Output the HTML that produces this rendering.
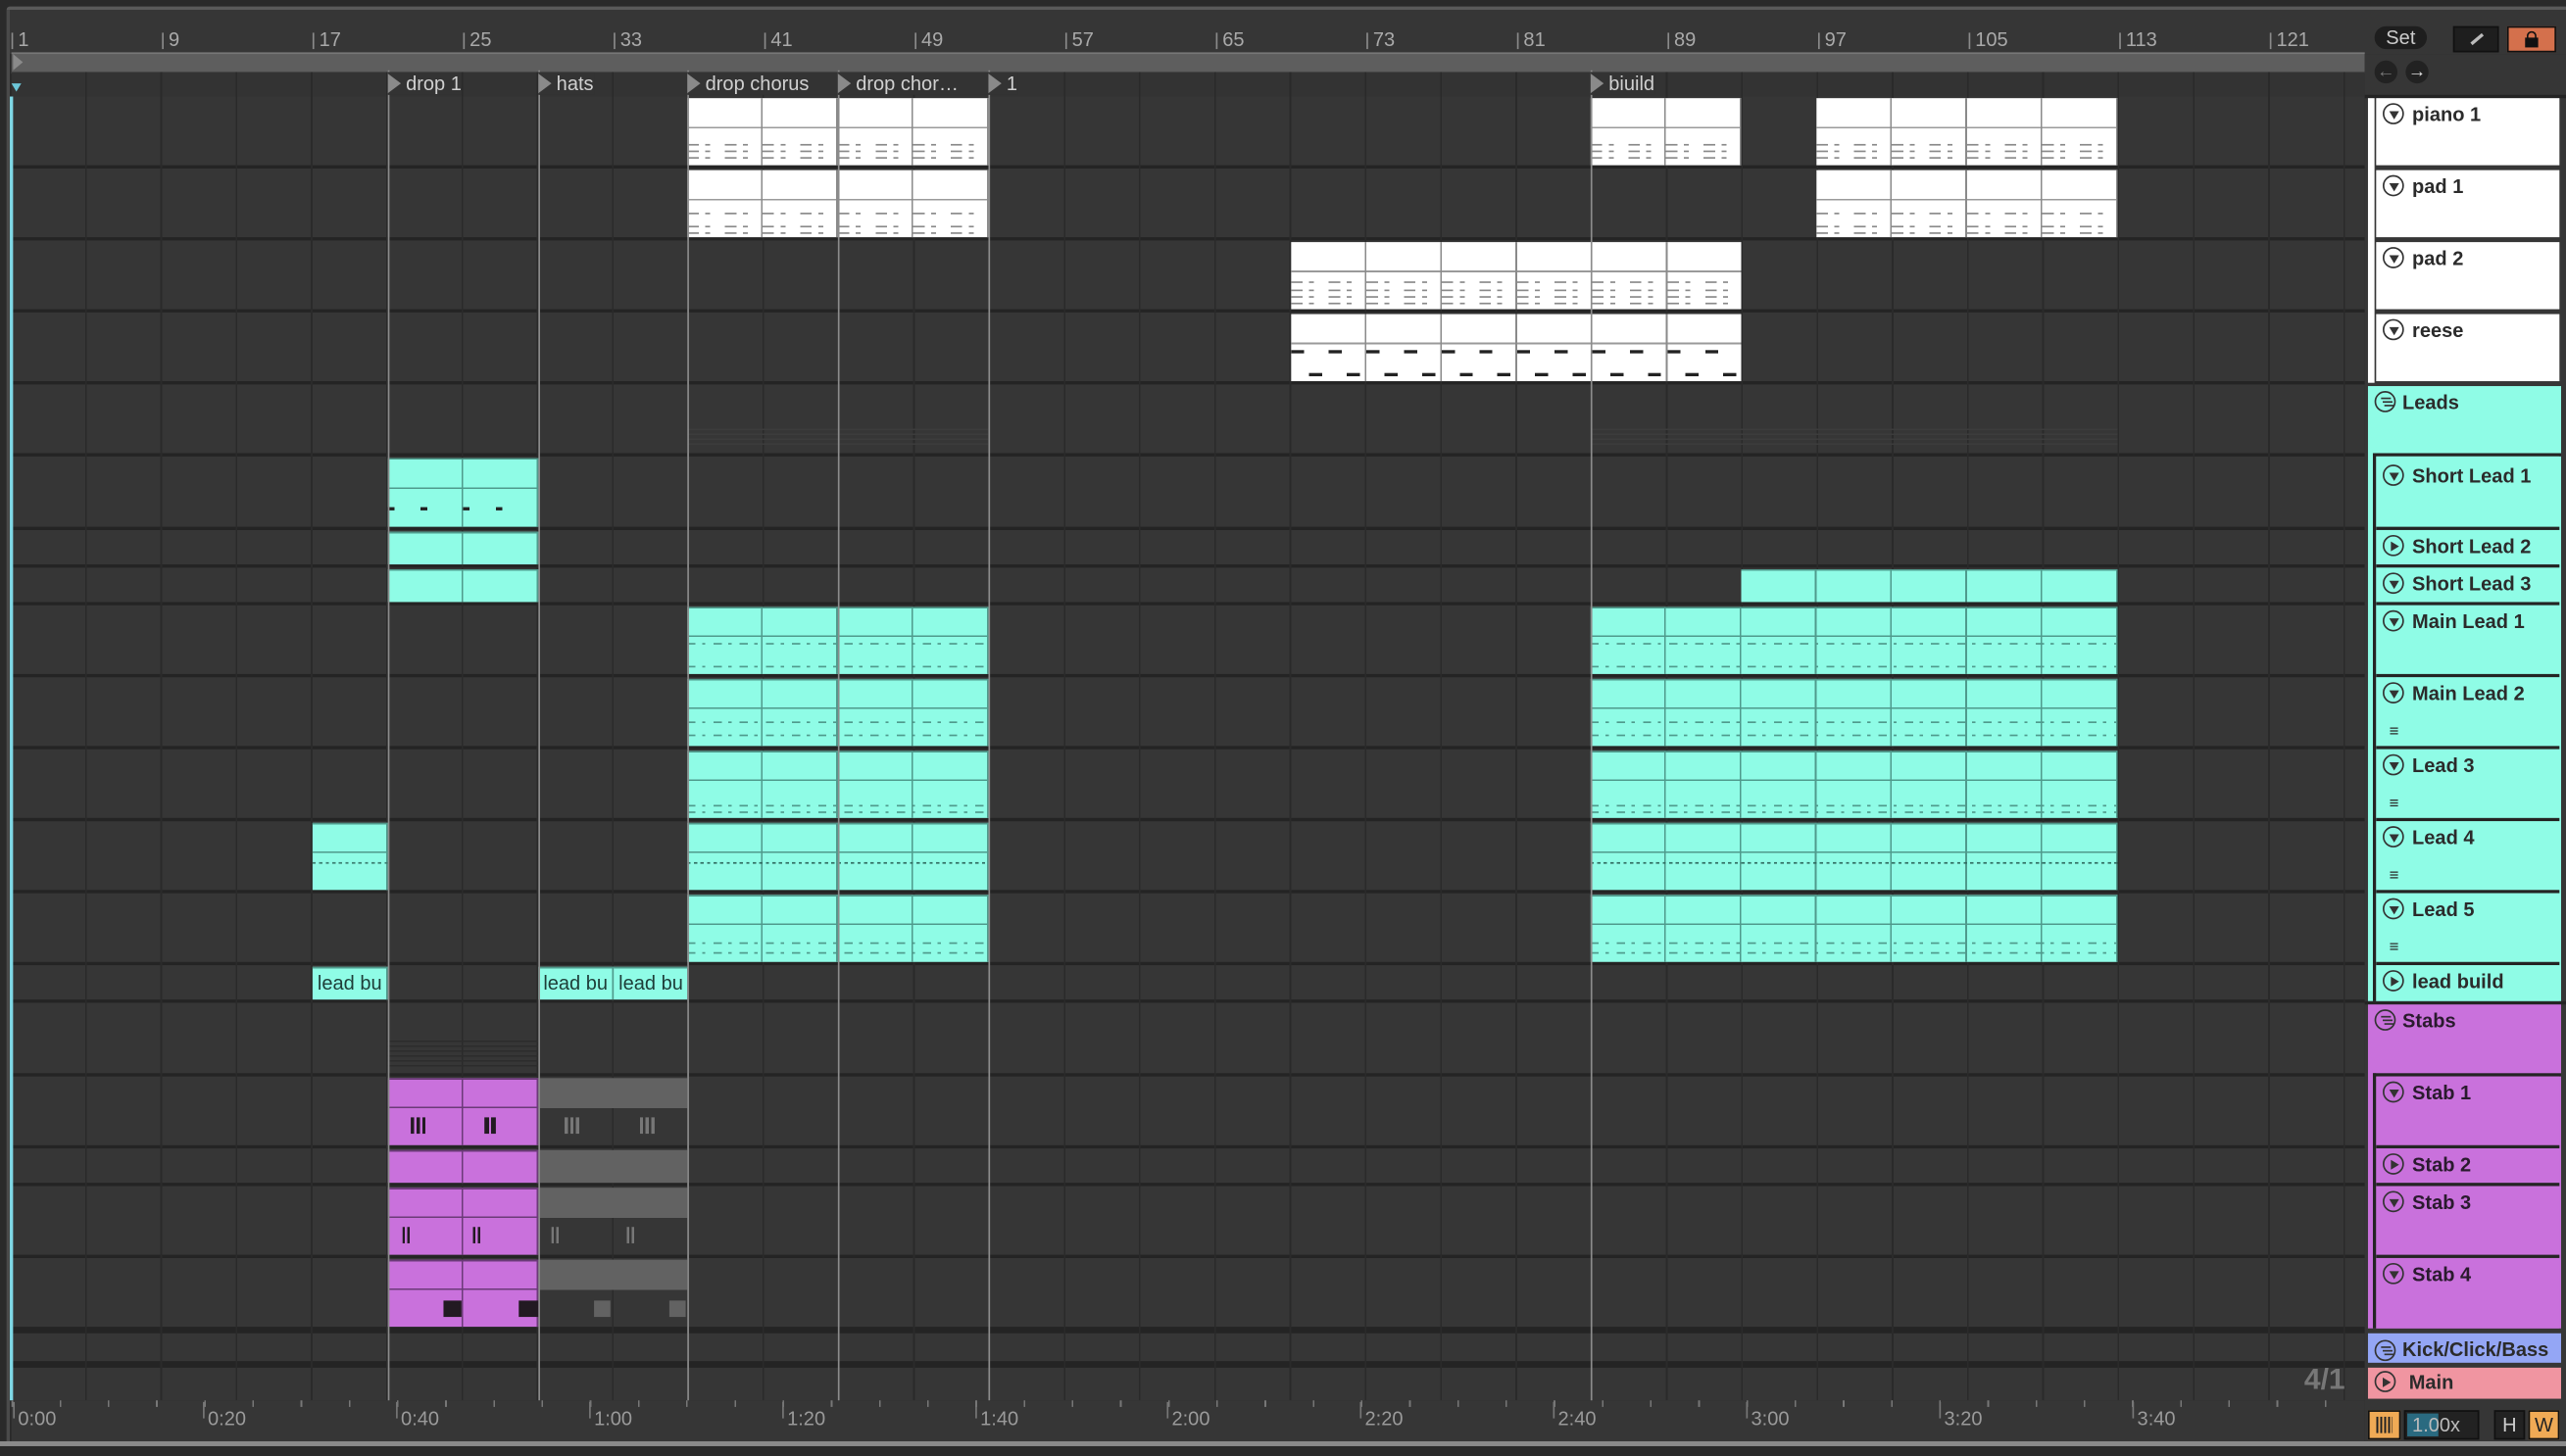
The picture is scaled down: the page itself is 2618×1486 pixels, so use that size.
<!DOCTYPE html>
<html><head><meta charset="utf-8"><style>
html,body{margin:0;padding:0;background:#2a2a2a;overflow:hidden;width:2618px;height:1486px}
#s{position:absolute;left:0;top:0;width:1568px;height:890px;transform:scale(1.66964,1.66966);transform-origin:0 0;font-family:"Liberation Sans",sans-serif;background:#2a2a2a}
.a{position:absolute}
.rl{position:absolute;top:17px;font-size:12px;color:#a9a9a9}
.tk{position:absolute;top:20px;width:1px;height:10px;background:#8a8a8a}
.row{position:absolute;left:7px;width:1438px;background:#363636}
.loc{position:absolute;top:43px;width:1px;height:814px;background:#8c8c8c}
.ll{position:absolute;top:44px;font-size:12px;color:#d0d0d0;padding-left:11px;background:#333;height:14px;line-height:14px}
.ll:before{content:"";position:absolute;left:0;top:1px;width:0;height:0;border-left:8px solid #8a8a8a;border-top:6px solid transparent;border-bottom:6px solid transparent}
.c{position:absolute;background:repeating-linear-gradient(90deg,transparent 0 45px,#4f9a8c 45px 46px),linear-gradient(#4f9a8c 0 1px,transparent 1px calc(45% - 1px),#4f9a8c calc(45% - 1px) 45%,transparent 45%),#8ffce6}
.cs{position:absolute;background:repeating-linear-gradient(90deg,transparent 0 45px,#4f9a8c 45px 46px),linear-gradient(#4f9a8c 0 1px,transparent 1px),#8ffce6}
.p{position:absolute;background:repeating-linear-gradient(90deg,transparent 0 45px,#6b3a78 45px 46px),linear-gradient(#6b3a78 0 1px,transparent 1px calc(45% - 1px),#6b3a78 calc(45% - 1px) 45%,transparent 45%),#c971dc}
.ps{position:absolute;background:repeating-linear-gradient(90deg,transparent 0 45px,#6b3a78 45px 46px),linear-gradient(#6b3a78 0 1px,transparent 1px),#c971dc}
.g{position:absolute;background:linear-gradient(#626262 0 45%,transparent 45%)}
.gs{position:absolute;background:#626262}
.w{position:absolute;background:repeating-linear-gradient(90deg,transparent 0 45px,#8a8a8a 45px 46px),linear-gradient(transparent calc(45% - 1px),#9a9a9a calc(45% - 1px) 45%,transparent 45%),#fff}
.n{position:absolute;left:0;right:0;height:1px}
.nc{background:repeating-linear-gradient(90deg,#4f9a8c 0 5px,transparent 5px 9px,#4f9a8c 9px 11px,transparent 11px 16px)}
.nw{background:repeating-linear-gradient(90deg,#8a8a8a 0 7px,transparent 7px 11px,#8a8a8a 11px 14px,transparent 14px 23px)}
.hd{position:absolute;left:1452px;width:112px;font-size:12px;font-weight:bold;color:#2b2b2b}
.hd span{position:absolute;left:22px;top:3px;white-space:nowrap}
.ic{position:absolute;left:4px;top:3px;width:11px;height:11px;border:1.4px solid #333;border-radius:50%}
.ic.d:after{content:"";position:absolute;left:2.5px;top:3.5px;border-top:5px solid #333;border-left:3px solid transparent;border-right:3px solid transparent}
.ic.r:after{content:"";position:absolute;left:4px;top:2.5px;border-left:5px solid #333;border-top:3px solid transparent;border-bottom:3px solid transparent}
.ic.m:after{content:"";position:absolute;left:2.5px;top:3px;width:6px;height:1.2px;background:#333;box-shadow:1px 2.2px 0 #333,2px 4.4px 0 #333}
.tm{position:absolute;top:860px;font-size:12px;color:#9a9a9a}
.tm:before{content:"";position:absolute;left:-3px;top:-3px;width:1px;height:10px;background:#777}
</style></head><body><div id="s">
<div class="a" style="left:4px;top:4px;width:1564px;height:2px;background:#5a5a5a;border-radius:3px 0 0 0"></div>
<div class="a" style="left:4px;top:6px;width:1564px;height:27px;background:#363636"></div>
<div class="a" style="left:4px;top:6px;width:2px;height:876px;background:#4a4a4a"></div>
<div class="a" style="left:7px;top:32px;width:1438px;height:11px;background:#5e5e5e;border-top:1px solid #777;border-bottom:1px solid #777"></div>
<div class="a" style="left:8px;top:33px;border-left:6px solid #8a8a8a;border-top:5px solid transparent;border-bottom:5px solid transparent"></div>
<div class="a" style="left:7px;top:44px;width:1438px;height:15px;background:#333;background-image:repeating-linear-gradient(90deg,transparent 0 45px,#2a2a2a 45px 46px)"></div>
<div class="tk" style="left:7px"></div><div class="rl" style="left:11px">1</div>
<div class="tk" style="left:99px"></div><div class="rl" style="left:103px">9</div>
<div class="tk" style="left:191px"></div><div class="rl" style="left:195px">17</div>
<div class="tk" style="left:283px"></div><div class="rl" style="left:287px">25</div>
<div class="tk" style="left:375px"></div><div class="rl" style="left:379px">33</div>
<div class="tk" style="left:467px"></div><div class="rl" style="left:471px">41</div>
<div class="tk" style="left:559px"></div><div class="rl" style="left:563px">49</div>
<div class="tk" style="left:651px"></div><div class="rl" style="left:655px">57</div>
<div class="tk" style="left:743px"></div><div class="rl" style="left:747px">65</div>
<div class="tk" style="left:835px"></div><div class="rl" style="left:839px">73</div>
<div class="tk" style="left:927px"></div><div class="rl" style="left:931px">81</div>
<div class="tk" style="left:1019px"></div><div class="rl" style="left:1023px">89</div>
<div class="tk" style="left:1111px"></div><div class="rl" style="left:1115px">97</div>
<div class="tk" style="left:1203px"></div><div class="rl" style="left:1207px">105</div>
<div class="tk" style="left:1295px"></div><div class="rl" style="left:1299px">113</div>
<div class="tk" style="left:1387px"></div><div class="rl" style="left:1391px">121</div>
<div class="a" style="left:7px;top:59px;width:1438px;height:797px;background:#242424"></div>
<div class="row" style="top:59px;height:42px"></div>
<div class="row" style="top:103px;height:42px"></div>
<div class="row" style="top:147px;height:42px"></div>
<div class="row" style="top:191px;height:42px"></div>
<div class="row" style="top:235px;height:42px"></div>
<div class="row" style="top:279px;height:43px"></div>
<div class="row" style="top:324px;height:21px"></div>
<div class="row" style="top:347px;height:21px"></div>
<div class="row" style="top:370px;height:42px"></div>
<div class="row" style="top:414px;height:42px"></div>
<div class="row" style="top:458px;height:42px"></div>
<div class="row" style="top:502px;height:42px"></div>
<div class="row" style="top:546px;height:42px"></div>
<div class="row" style="top:590px;height:21px"></div>
<div class="row" style="top:613px;height:43px"></div>
<div class="row" style="top:658px;height:42px"></div>
<div class="row" style="top:702px;height:21px"></div>
<div class="row" style="top:725px;height:42px"></div>
<div class="row" style="top:769px;height:42px"></div>
<div class="row" style="top:815px;height:17px"></div>
<div class="row" style="top:836px;height:20px"></div>
<div class="a" style="left:7px;top:59px;width:1438px;height:797px;background:repeating-linear-gradient(90deg,transparent 0 45px,#2a2a2a 45px 46px)"></div>
<div class="a" style="left:6px;top:59px;width:2px;height:797px;background:#7fd8e6"></div>
<div class="a" style="left:420px;top:262px;width:184px;height:12px;background:repeating-linear-gradient(#3c3c3c 0 1px,transparent 1px 3px)"></div>
<div class="a" style="left:972px;top:262px;width:322px;height:12px;background:repeating-linear-gradient(#3c3c3c 0 1px,transparent 1px 3px)"></div>
<div class="a" style="left:237px;top:636px;width:92px;height:18px;background:repeating-linear-gradient(#2c2c2c 0 1px,transparent 1px 3px)"></div>
<div class="w" style="left:420px;top:60px;width:184px;height:41px"><div class="n nw" style="top:28px"></div><div class="n nw" style="top:32px"></div><div class="n nw" style="top:36px"></div></div>
<div class="w" style="left:972px;top:60px;width:92px;height:41px"><div class="n nw" style="top:28px"></div><div class="n nw" style="top:32px"></div><div class="n nw" style="top:36px"></div></div>
<div class="w" style="left:1110px;top:60px;width:184px;height:41px"><div class="n nw" style="top:28px"></div><div class="n nw" style="top:32px"></div><div class="n nw" style="top:36px"></div></div>
<div class="w" style="left:420px;top:104px;width:184px;height:41px"><div class="n nw" style="top:26px"></div><div class="n nw" style="top:34px"></div><div class="n nw" style="top:38px"></div></div>
<div class="w" style="left:1110px;top:104px;width:184px;height:41px"><div class="n nw" style="top:26px"></div><div class="n nw" style="top:34px"></div><div class="n nw" style="top:38px"></div></div>
<div class="w" style="left:789px;top:148px;width:275px;height:41px"><div class="n nw" style="top:24px"></div><div class="n nw" style="top:29px"></div><div class="n nw" style="top:33px"></div><div class="n nw" style="top:37px"></div></div>
<div class="w" style="left:789px;top:192px;width:275px;height:41px"><div class="n" style="top:22px;height:2px;background:repeating-linear-gradient(90deg,#222 0 8px,transparent 8px 23px)"></div><div class="n" style="top:36px;height:2px;background:repeating-linear-gradient(90deg,transparent 0 11px,#222 11px 19px,transparent 19px 23px)"></div></div>
<div class="c" style="left:237px;top:280px;width:92px;height:42px"><div class="n" style="top:30px;height:2px;background:repeating-linear-gradient(90deg,#222 0 4px,transparent 4px 20px,#222 20px 24px,transparent 24px 46px)"></div></div>
<div class="cs" style="left:237px;top:325px;width:92px;height:20px"></div>
<div class="cs" style="left:237px;top:348px;width:92px;height:20px"></div>
<div class="cs" style="left:1064px;top:348px;width:230px;height:20px"></div>
<div class="c" style="left:420px;top:371px;width:184px;height:41px"><div class="n nc" style="top:22px"></div><div class="n nc" style="top:36px"></div></div>
<div class="c" style="left:972px;top:371px;width:322px;height:41px"><div class="n nc" style="top:22px"></div><div class="n nc" style="top:36px"></div></div>
<div class="c" style="left:420px;top:415px;width:184px;height:41px"><div class="n nc" style="top:26px"></div><div class="n nc" style="top:34px"></div></div>
<div class="c" style="left:972px;top:415px;width:322px;height:41px"><div class="n nc" style="top:26px"></div><div class="n nc" style="top:34px"></div></div>
<div class="c" style="left:420px;top:459px;width:184px;height:41px"><div class="n nc" style="top:33px"></div><div class="n nc" style="top:37px"></div></div>
<div class="c" style="left:972px;top:459px;width:322px;height:41px"><div class="n nc" style="top:33px"></div><div class="n nc" style="top:37px"></div></div>
<div class="c" style="left:191px;top:503px;width:46px;height:41px"><div class="n" style="top:24px;background:repeating-linear-gradient(90deg,#3a7a6e 0 2px,transparent 2px 4px)"></div></div>
<div class="c" style="left:420px;top:503px;width:184px;height:41px"><div class="n" style="top:24px;background:repeating-linear-gradient(90deg,#2f6a60 0 2px,transparent 2px 4px)"></div></div>
<div class="c" style="left:972px;top:503px;width:322px;height:41px"><div class="n" style="top:24px;background:repeating-linear-gradient(90deg,#2f6a60 0 2px,transparent 2px 4px)"></div></div>
<div class="c" style="left:420px;top:547px;width:184px;height:41px"><div class="n nc" style="top:29px"></div><div class="n nc" style="top:35px"></div></div>
<div class="c" style="left:972px;top:547px;width:322px;height:41px"><div class="n nc" style="top:29px"></div><div class="n nc" style="top:35px"></div></div>
<div class="cs" style="left:191px;top:591px;width:46px;height:20px;font-size:12px;color:#1e3d38;overflow:hidden;white-space:nowrap"><span style="position:absolute;left:3px;top:3px">lead bu</span></div>
<div class="cs" style="left:329px;top:591px;width:46px;height:20px;font-size:12px;color:#1e3d38;overflow:hidden;white-space:nowrap"><span style="position:absolute;left:3px;top:3px">lead bu</span></div>
<div class="cs" style="left:375px;top:591px;width:45px;height:20px;font-size:12px;color:#1e3d38;overflow:hidden;white-space:nowrap"><span style="position:absolute;left:3px;top:3px">lead bu</span></div>
<div class="p" style="left:237px;top:659px;width:92px;height:41px"><div class="a" style="left:14px;top:24px;width:9px;height:10px;background:repeating-linear-gradient(90deg,#221a22 0 2px,transparent 2px 3.5px)"></div><div class="a" style="left:59px;top:24px;width:7px;height:10px;background:repeating-linear-gradient(90deg,#221a22 0 3px,transparent 3px 4px)"></div></div>
<div class="g" style="left:329px;top:659px;width:91px;height:41px"><div class="a" style="left:16px;top:24px;width:9px;height:10px;background:repeating-linear-gradient(90deg,#777 0 2px,transparent 2px 3.5px)"></div><div class="a" style="left:62px;top:24px;width:9px;height:10px;background:repeating-linear-gradient(90deg,#777 0 2px,transparent 2px 3.5px)"></div></div>
<div class="ps" style="left:237px;top:703px;width:92px;height:20px"></div>
<div class="gs" style="left:329px;top:703px;width:91px;height:20px"></div>
<div class="p" style="left:237px;top:726px;width:92px;height:41px"><div class="a" style="left:9px;top:24px;width:5px;height:10px;background:repeating-linear-gradient(90deg,#221a22 0 1.5px,transparent 1.5px 3px)"></div><div class="a" style="left:52px;top:24px;width:5px;height:10px;background:repeating-linear-gradient(90deg,#221a22 0 1.5px,transparent 1.5px 3px)"></div></div>
<div class="g" style="left:329px;top:726px;width:91px;height:41px"><div class="a" style="left:8px;top:24px;width:5px;height:10px;background:repeating-linear-gradient(90deg,#777 0 1.5px,transparent 1.5px 3px)"></div><div class="a" style="left:54px;top:24px;width:5px;height:10px;background:repeating-linear-gradient(90deg,#777 0 1.5px,transparent 1.5px 3px)"></div></div>
<div class="p" style="left:237px;top:770px;width:92px;height:41px"><div class="a" style="left:34px;top:25px;width:11px;height:10px;background:#221a22"></div><div class="a" style="left:80px;top:25px;width:12px;height:10px;background:#221a22"></div></div>
<div class="g" style="left:329px;top:770px;width:91px;height:41px"><div class="a" style="left:34px;top:25px;width:10px;height:10px;background:#626262"></div><div class="a" style="left:80px;top:25px;width:10px;height:10px;background:#626262"></div></div>
<div class="loc" style="left:237px"></div><div class="loc" style="left:329px"></div><div class="loc" style="left:420px"></div><div class="loc" style="left:512px"></div><div class="loc" style="left:604px"></div><div class="loc" style="left:972px"></div>
<div class="ll" style="left:237px">drop 1</div>
<div class="ll" style="left:329px">hats</div>
<div class="ll" style="left:420px;width:80px">drop chorus</div>
<div class="ll" style="left:512px;width:80px">drop chor…</div>
<div class="ll" style="left:604px">1</div>
<div class="ll" style="left:972px">biuild</div>
<div class="a" style="left:7px;top:51px;border-top:5px solid #6cc6d8;border-left:3px solid transparent;border-right:3px solid transparent"></div>
<div class="a" style="left:7px;top:856px;width:1438px;height:25px;background:#363636;background-image:repeating-linear-gradient(90deg,#777 0 1px,transparent 1px 29.45px);background-size:100% 4px;background-repeat:repeat-x"></div>
<div class="tm" style="left:11px">0:00</div><div class="tm" style="left:127px">0:20</div><div class="tm" style="left:245px">0:40</div><div class="tm" style="left:363px">1:00</div><div class="tm" style="left:481px">1:20</div><div class="tm" style="left:599px">1:40</div><div class="tm" style="left:716px">2:00</div><div class="tm" style="left:834px">2:20</div><div class="tm" style="left:952px">2:40</div><div class="tm" style="left:1070px">3:00</div><div class="tm" style="left:1188px">3:20</div><div class="tm" style="left:1306px">3:40</div>
<div class="a" style="left:0;top:881px;width:1568px;height:3px;background:#8a8a8a"></div>
<div class="a" style="left:1408px;top:833px;font-size:18px;font-weight:bold;color:#777">4/1</div>
<div class="a" style="left:1445px;top:33px;width:123px;height:848px;background:#363636"></div>
<div class="a" style="left:1451px;top:16px;width:32px;height:14px;border-radius:8px;background:#1e1e1e;color:#ccc;font-size:12px;text-align:center;line-height:14px">Set</div>
<div class="a" style="left:1499px;top:16px;width:26px;height:14px;background:#1e1e1e;border:1px solid #111"><div class="a" style="left:9px;top:6px;width:9px;height:1.5px;background:#bbb;transform:rotate(-40deg)"></div></div>
<div class="a" style="left:1532px;top:16px;width:28px;height:14px;background:#d4704c;border:1px solid #111"><div class="a" style="left:10px;top:6px;width:8px;height:6px;background:#111"></div><div class="a" style="left:11px;top:2px;width:4px;height:4px;border:1.2px solid #111;border-bottom:0;border-radius:3px 3px 0 0"></div></div>
<div class="a" style="left:1451px;top:37px;width:14px;height:14px;border-radius:50%;background:#222;color:#777;font-size:11px;text-align:center;line-height:14px">←</div>
<div class="a" style="left:1470px;top:37px;width:14px;height:14px;border-radius:50%;background:#222;color:#ddd;font-size:11px;text-align:center;line-height:14px">→</div>
<div class="a" style="left:1445px;top:58px;width:123px;height:2px;background:#242424"></div>
<div class="a" style="left:1447px;top:60px;width:4px;height:174px;background:#fff"></div>
<div class="hd" style="top:60px;height:41px;background:#fff"><div class="ic d"></div><span>piano 1</span></div>
<div class="hd" style="top:104px;height:41px;background:#fff"><div class="ic d"></div><span>pad 1</span></div>
<div class="hd" style="top:148px;height:41px;background:#fff"><div class="ic d"></div><span>pad 2</span></div>
<div class="hd" style="top:192px;height:41px;background:#fff"><div class="ic d"></div><span>reese</span></div>
<div class="a" style="left:1447px;top:236px;width:118px;height:376px;background:#8ffce6"></div>
<div class="hd" style="top:236px;left:1447px;width:118px;height:41px"><div class="ic m"></div><span style="left:21px">Leads</span></div>
<div class="a" style="left:1450px;top:277px;width:2px;height:335px;background:#242424"></div>
<div class="a" style="left:1450px;top:277px;width:115px;height:2px;background:#242424"></div>
<div class="hd" style="top:279px;height:43px;background:#8ffce6;border-bottom:2px solid #242424"><div class="ic d" style="top:5px"></div><span style="top:5px">Short Lead 1</span></div>
<div class="hd" style="top:324px;height:21px;background:#8ffce6;border-bottom:2px solid #242424"><div class="ic r"></div><span>Short Lead 2</span></div>
<div class="hd" style="top:347px;height:21px;background:#8ffce6;border-bottom:2px solid #242424"><div class="ic d"></div><span>Short Lead 3</span></div>
<div class="hd" style="top:370px;height:42px;background:#8ffce6;border-bottom:2px solid #242424"><div class="ic d"></div><span>Main Lead 1</span></div>
<div class="hd" style="top:414px;height:42px;background:#8ffce6;border-bottom:2px solid #242424"><div class="ic d"></div><span>Main Lead 2</span><div class="a" style="left:8px;top:28px;font-size:10px">≡</div></div>
<div class="hd" style="top:458px;height:42px;background:#8ffce6;border-bottom:2px solid #242424"><div class="ic d"></div><span>Lead 3</span><div class="a" style="left:8px;top:28px;font-size:10px">≡</div></div>
<div class="hd" style="top:502px;height:42px;background:#8ffce6;border-bottom:2px solid #242424"><div class="ic d"></div><span>Lead 4</span><div class="a" style="left:8px;top:28px;font-size:10px">≡</div></div>
<div class="hd" style="top:546px;height:42px;background:#8ffce6;border-bottom:2px solid #242424"><div class="ic d"></div><span>Lead 5</span><div class="a" style="left:8px;top:28px;font-size:10px">≡</div></div>
<div class="hd" style="top:590px;height:22px;background:#8ffce6"><div class="ic r"></div><span>lead build</span></div>
<div class="a" style="left:1445px;top:612px;width:123px;height:2px;background:#242424"></div>
<div class="a" style="left:1447px;top:614px;width:118px;height:198px;background:#c971dc"></div>
<div class="hd" style="top:614px;left:1447px;width:118px;height:41px;color:#2a1a2e"><div class="ic m"></div><span style="left:21px">Stabs</span></div>
<div class="a" style="left:1450px;top:656px;width:2px;height:156px;background:#242424"></div>
<div class="a" style="left:1450px;top:656px;width:115px;height:2px;background:#242424"></div>
<div class="hd" style="top:658px;height:42px;background:#c971dc;border-bottom:2px solid #242424;color:#2a1a2e"><div class="ic d"></div><span>Stab 1</span></div>
<div class="hd" style="top:702px;height:21px;background:#c971dc;border-bottom:2px solid #242424;color:#2a1a2e"><div class="ic r"></div><span>Stab 2</span></div>
<div class="hd" style="top:725px;height:42px;background:#c971dc;border-bottom:2px solid #242424;color:#2a1a2e"><div class="ic d"></div><span>Stab 3</span></div>
<div class="hd" style="top:769px;height:43px;background:#c971dc;color:#2a1a2e"><div class="ic d"></div><span>Stab 4</span></div>
<div class="hd" style="top:815px;left:1447px;width:118px;height:18px;background:#94a6f5;overflow:hidden"><div class="ic m" style="top:4px"></div><span style="left:21px;top:3px">Kick/Click/Bass</span></div>
<div class="hd" style="top:836px;left:1447px;width:118px;height:19px;background:#f095a1"><div class="ic r" style="top:2px"></div><span style="left:25px;top:2px">Main</span></div>
<div class="a" style="left:1447px;top:862px;width:18px;height:16px;background:#f0aa55;border:1px solid #111"><div class="a" style="left:4px;top:3px;width:10px;height:10px;background:repeating-linear-gradient(90deg,#222 0 1.2px,transparent 1.2px 2.4px)"></div></div>
<div class="a" style="left:1469px;top:862px;width:44px;height:16px;background:#222;border:1px solid #111;font-size:12px;color:#bbb;line-height:16px"><div class="a" style="left:1px;top:1px;width:19px;height:14px;background:#2a6a80"></div><span style="position:absolute;left:4px">1.00x</span></div>
<div class="a" style="left:1524px;top:862px;width:17px;height:16px;background:#222;border:1px solid #111;font-size:12px;color:#ccc;text-align:center;line-height:16px">H</div>
<div class="a" style="left:1545px;top:862px;width:17px;height:16px;background:#f0aa55;border:1px solid #111;font-size:12px;color:#222;text-align:center;line-height:16px">W</div>
</div></body></html>
